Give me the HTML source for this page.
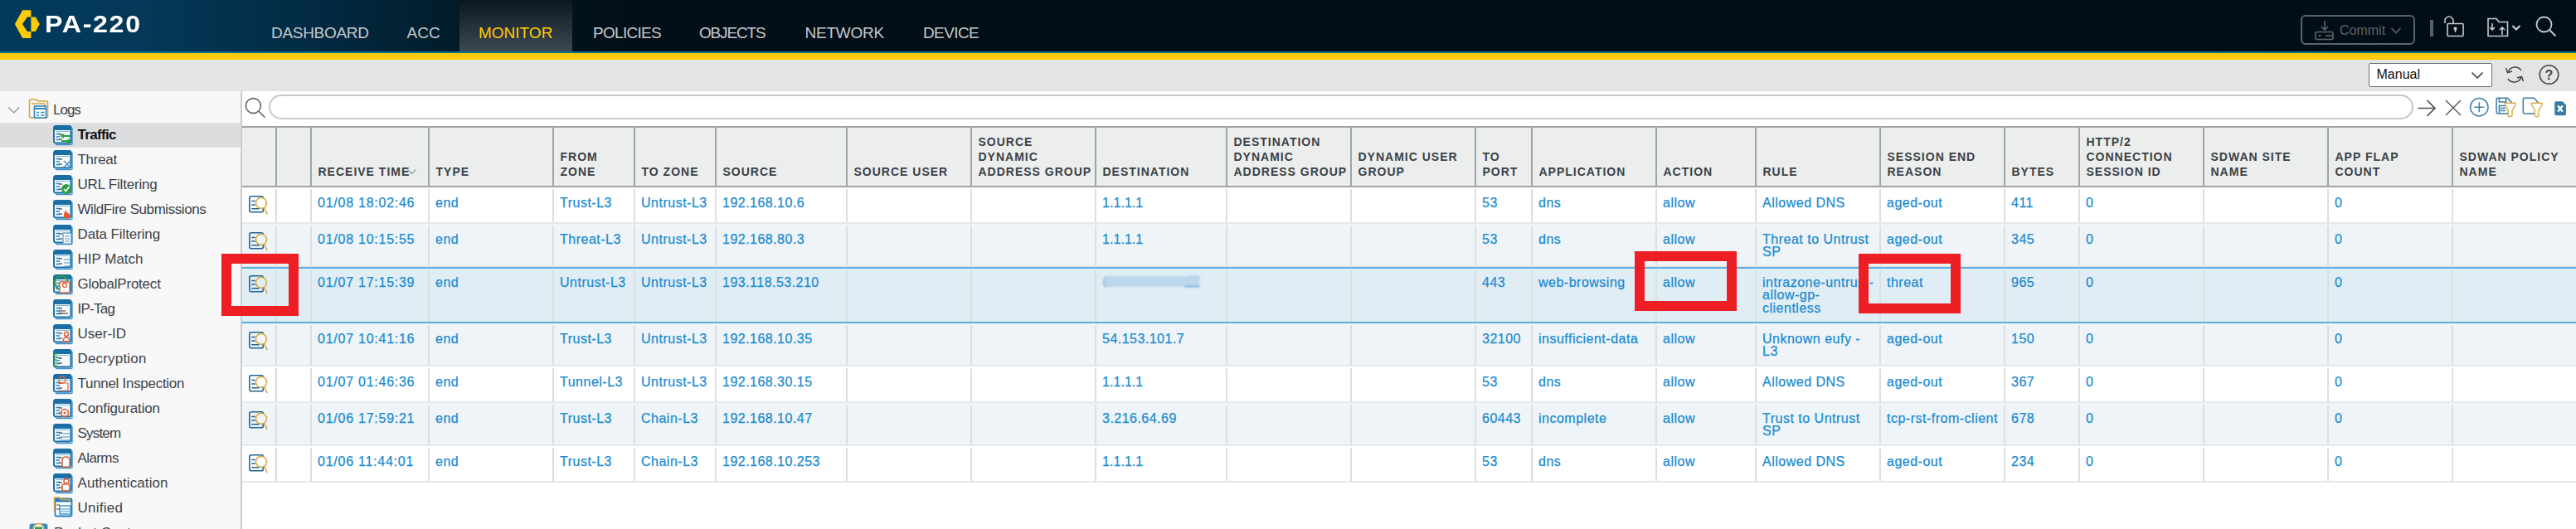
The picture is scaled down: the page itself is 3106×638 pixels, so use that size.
<!DOCTYPE html><html><head><meta charset="utf-8"><style>
html,body{margin:0;padding:0;}body{width:3106px;height:638px;overflow:hidden;position:relative;background:#fff;font-family:"Liberation Sans",sans-serif;}
.t{position:absolute;white-space:nowrap;}.b{-webkit-text-stroke:0.25px #1b8bd0;}.r{position:absolute;}svg{position:absolute;overflow:visible;}
</style></head><body>
<div class="r" style="left:0px;top:0px;width:3106px;height:62px;background:linear-gradient(90deg,#033a5c 0px,#033858 180px,#02273d 420px,#021722 600px,#020f18 760px,#020e17 3106px);"></div>
<div class="r" style="left:554px;top:0px;width:136px;height:62px;background:linear-gradient(180deg,#0b171f 0%,#24313a 50%,#3c4952 100%);"></div>
<div class="r" style="left:0px;top:62px;width:3106px;height:2px;background:#0a6e99;"></div>
<div class="r" style="left:0px;top:64px;width:3106px;height:8px;background:#ffcb05;"></div>
<div class="r" style="left:0px;top:72px;width:3106px;height:38px;background:#e3e4e6;"></div>
<svg style="left:0;top:0" width="60" height="62"><path fill="#ffcb05" d="M17.9,28.9 L27.2,12.2 L37.4,12.2 L37.4,20.4 L32.9,20.4 L27,28.9 L32.9,38 L37.4,38 L37.4,45.9 L27.2,45.9 Z M37.4,20.4 L42.9,20.4 L47.9,28.9 L42.9,38 L37.4,38 Z"/></svg>
<div class="t" style="left:54px;top:15.15px;font-size:29px;line-height:29px;color:#ffffff;font-weight:bold;letter-spacing:1.5px;transform:scaleX(1.11);transform-origin:0 0;">PA-220</div>
<div class="t" style="left:327px;top:29.92px;font-size:19px;line-height:19px;color:#c5c9cc;font-weight:normal;letter-spacing:-0.31px;">DASHBOARD</div>
<div class="t" style="left:490.5px;top:29.92px;font-size:19px;line-height:19px;color:#c5c9cc;font-weight:normal;letter-spacing:0px;">ACC</div>
<div class="t" style="left:577px;top:29.92px;font-size:19px;line-height:19px;color:#ffcb05;font-weight:normal;letter-spacing:0px;">MONITOR</div>
<div class="t" style="left:715px;top:29.92px;font-size:19px;line-height:19px;color:#c5c9cc;font-weight:normal;letter-spacing:-0.7px;">POLICIES</div>
<div class="t" style="left:843px;top:29.92px;font-size:19px;line-height:19px;color:#c5c9cc;font-weight:normal;letter-spacing:-1.17px;">OBJECTS</div>
<div class="t" style="left:970.5px;top:29.92px;font-size:19px;line-height:19px;color:#c5c9cc;font-weight:normal;letter-spacing:-0.25px;">NETWORK</div>
<div class="t" style="left:1113px;top:29.92px;font-size:19px;line-height:19px;color:#c5c9cc;font-weight:normal;letter-spacing:-0.6px;">DEVICE</div>
<div class="r" style="left:2774px;top:18px;width:134px;height:32px;border:2px solid #5d6469;border-radius:6px;"></div>
<svg style="left:2790px;top:23.5px" width="26" height="28"><g fill="none" stroke="#5d6469" stroke-width="1.6"><path d="M13,1 V12 M9,8 L13,12 L17,8"/><rect x="2" y="14.5" width="21" height="9" rx="2"/><path d="M14,19 H23"/></g><circle cx="7" cy="19" r="1.3" fill="#5d6469"/></svg>
<div class="t" style="left:2821px;top:28.66px;font-size:16px;line-height:16px;color:#5d6469;font-weight:normal;letter-spacing:0px;">Commit</div>
<svg style="left:2882px;top:32px" width="14" height="10"><path d="M1.5,2 L7,7.5 L12.5,2" fill="none" stroke="#5d6469" stroke-width="1.6"/></svg>
<div class="r" style="left:2930px;top:24px;width:4px;height:20px;background:#5a6166;"></div>
<svg style="left:2946px;top:19px" width="28" height="26"><g fill="none" stroke="#c8cbcd" stroke-width="1.6"><path d="M2,9 V6 A5,5 0 0 1 12,6 V9"/><rect x="5" y="9.5" width="19" height="15" rx="1"/></g><circle cx="14.5" cy="15.5" r="2" fill="#c8cbcd"/><rect x="13.7" y="16" width="1.6" height="4" fill="#c8cbcd"/></svg>
<svg style="left:2999px;top:21px" width="44" height="24"><g fill="none" stroke="#c8cbcd" stroke-width="1.6"><path d="M1,1.5 H11 L14,5.5 H24.5 V22.5 H1 Z"/><path d="M6,7 V15 M3,12 L6,15 L9,12 M18,21 V12 M15,15 L18,12 L21,15"/></g><path d="M30.5,10 L35,14.5 L39.5,10" fill="none" stroke="#c8cbcd" stroke-width="2.2"/></svg>
<svg style="left:3057px;top:19px" width="28" height="28"><g fill="none" stroke="#c8cbcd" stroke-width="1.8"><circle cx="10.5" cy="10.5" r="9"/><path d="M17,17 L24.5,24.5"/></g></svg>
<div class="r" style="left:2856px;top:76px;width:147px;height:27px;background:#fff;border:1px solid #6b6f72;border-radius:2px;"></div>
<div class="t" style="left:2865.5px;top:82.36px;font-size:16px;line-height:16px;color:#111;font-weight:normal;letter-spacing:0px;">Manual</div>
<svg style="left:2979px;top:86px" width="16" height="11"><path d="M1.5,1.5 L8,8 L14.5,1.5" fill="none" stroke="#333" stroke-width="1.5"/></svg>
<svg style="left:3020px;top:78px" width="24" height="24"><g fill="none" stroke="#444" stroke-width="1.5"><path d="M4,9 A9,9 0 0 1 20,7"/><path d="M20,15 A9,9 0 0 1 4,17"/><path d="M1.5,4 L3.5,9.5 L9,8"/><path d="M22.5,20 L20.5,14.5 L15,16"/></g></svg>
<svg style="left:3061px;top:78px" width="26" height="26"><circle cx="12.5" cy="12" r="11.3" fill="none" stroke="#444" stroke-width="1.5"/><text x="12.5" y="17.5" text-anchor="middle" font-family="Liberation Sans" font-weight="bold" font-size="16" fill="#444">?</text></svg>
<div class="r" style="left:0px;top:110px;width:290px;height:528px;background:#f8f8f8;"></div>
<div class="r" style="left:290px;top:110px;width:2px;height:528px;background:#c9ccce;"></div>
<div class="r" style="left:0px;top:148px;width:290px;height:30px;background:#dcdddf;"></div>
<svg style="left:9px;top:128px" width="16" height="10"><path d="M1.2,1.5 L7.7,8 L14.2,1.5" fill="none" stroke="#979ca0" stroke-width="1.5"/></svg>
<svg style="left:34px;top:119px" width="25" height="24"><g fill="none" stroke="#d6a53c" stroke-width="1.6"><path d="M1.5,3 Q1.5,1 3.5,1 H10 L12,3 H21.5 Q23.5,3 23.5,5 V21.5 Q23.5,23 21.5,23 H3.5 Q1.5,23 1.5,21 Z"/><path d="M4,6 H20 V13"/></g><rect x="7.5" y="9" width="14" height="14" fill="#fff" stroke="#2e86c1" stroke-width="1.6"/><rect x="8" y="11" width="13" height="2" fill="#2e86c1"/><path d="M10,16.5 H13 M15,16.5 H19.5 M10,20 H13 M15,20 H19.5" stroke="#2e86c1" stroke-width="1.4"/></svg>
<div class="t" style="left:64px;top:124.11px;font-size:17px;line-height:17px;color:#3c4349;font-weight:normal;letter-spacing:-1px;">Logs</div>
<svg style="left:64px;top:151px" width="25" height="26"><path d="M3.2,3 H22 Q23,3 23,4 V22.5 Q23,23.5 22,23.5 H3.2" fill="none" stroke="#3d93cc" stroke-width="1.4"/><rect x="1" y="1" width="20.5" height="20.5" rx="2" fill="#f4f9fc" stroke="#1a6fa6" stroke-width="1.9"/><rect x="1" y="1" width="20.5" height="5" rx="1" fill="#1a6fa6"/><path d="M3.5,7.5 H19.5" stroke="#7db3d8" stroke-width="1"/><path d="M3.5,10.5 H8 M3.5,14 H8 M3.5,17.5 H8" stroke="#2d7fb8" stroke-width="1.3"/><path d="M7,11 H11 M7,17 H11" stroke="#222" stroke-width="1"/><path d="M10,13 H21 M13,11 L10,13 L13,15 M10,19 H21 M18,17 L21,19 L18,21" stroke="#2ea043" stroke-width="2" fill="none"/></svg>
<div class="t" style="left:93.5px;top:154.11px;font-size:17px;line-height:17px;color:#111;font-weight:bold;letter-spacing:-0.67px;">Traffic</div>
<svg style="left:64px;top:181px" width="25" height="26"><path d="M3.2,3 H22 Q23,3 23,4 V22.5 Q23,23.5 22,23.5 H3.2" fill="none" stroke="#3d93cc" stroke-width="1.4"/><rect x="1" y="1" width="20.5" height="20.5" rx="2" fill="#f4f9fc" stroke="#1a6fa6" stroke-width="1.9"/><rect x="1" y="1" width="20.5" height="5" rx="1" fill="#1a6fa6"/><path d="M3.5,7.5 H19.5" stroke="#7db3d8" stroke-width="1"/><path d="M3.5,10.5 H8 M3.5,14 H8 M3.5,17.5 H8" stroke="#2d7fb8" stroke-width="1.3"/><path d="M7,11 H11 M7,17 H11" stroke="#222" stroke-width="1"/><path d="M13,13 L21,21 M21,13 L13,21" stroke="#4a8fc6" stroke-width="1.5"/></svg>
<div class="t" style="left:93.5px;top:184.11px;font-size:17px;line-height:17px;color:#3c4349;font-weight:normal;letter-spacing:-0.28px;">Threat</div>
<svg style="left:64px;top:211px" width="25" height="26"><path d="M3.2,3 H22 Q23,3 23,4 V22.5 Q23,23.5 22,23.5 H3.2" fill="none" stroke="#3d93cc" stroke-width="1.4"/><rect x="1" y="1" width="20.5" height="20.5" rx="2" fill="#f4f9fc" stroke="#1a6fa6" stroke-width="1.9"/><rect x="1" y="1" width="20.5" height="5" rx="1" fill="#1a6fa6"/><path d="M3.5,7.5 H19.5" stroke="#7db3d8" stroke-width="1"/><path d="M3.5,10.5 H8 M3.5,14 H8 M3.5,17.5 H8" stroke="#2d7fb8" stroke-width="1.3"/><path d="M7,11 H11 M7,17 H11" stroke="#222" stroke-width="1"/><circle cx="16" cy="17" r="6" fill="#2ea043"/><path d="M13,17 L15.5,19.5 L19.5,14" stroke="#fff" stroke-width="1.6" fill="none"/></svg>
<div class="t" style="left:93.5px;top:214.11px;font-size:17px;line-height:17px;color:#3c4349;font-weight:normal;letter-spacing:-0.2px;">URL Filtering</div>
<svg style="left:64px;top:241px" width="25" height="26"><path d="M3.2,3 H22 Q23,3 23,4 V22.5 Q23,23.5 22,23.5 H3.2" fill="none" stroke="#3d93cc" stroke-width="1.4"/><rect x="1" y="1" width="20.5" height="20.5" rx="2" fill="#f4f9fc" stroke="#1a6fa6" stroke-width="1.9"/><rect x="1" y="1" width="20.5" height="5" rx="1" fill="#1a6fa6"/><path d="M3.5,7.5 H19.5" stroke="#7db3d8" stroke-width="1"/><path d="M3.5,10.5 H8 M3.5,14 H8 M3.5,17.5 H8" stroke="#2d7fb8" stroke-width="1.3"/><path d="M7,11 H11 M7,17 H11" stroke="#222" stroke-width="1"/><path d="M17,23 Q12,22 13,17 Q14,14 16,12 Q16,16 18,16 Q22,18 20,22 Z" fill="#f05a28"/></svg>
<div class="t" style="left:93.5px;top:244.11px;font-size:17px;line-height:17px;color:#3c4349;font-weight:normal;letter-spacing:-0.43px;">WildFire Submissions</div>
<svg style="left:64px;top:271px" width="25" height="26"><path d="M3.2,3 H22 Q23,3 23,4 V22.5 Q23,23.5 22,23.5 H3.2" fill="none" stroke="#3d93cc" stroke-width="1.4"/><rect x="1" y="1" width="20.5" height="20.5" rx="2" fill="#f4f9fc" stroke="#1a6fa6" stroke-width="1.9"/><rect x="1" y="1" width="20.5" height="5" rx="1" fill="#1a6fa6"/><path d="M3.5,7.5 H19.5" stroke="#7db3d8" stroke-width="1"/><path d="M3.5,10.5 H8 M3.5,14 H8 M3.5,17.5 H8" stroke="#2d7fb8" stroke-width="1.3"/><path d="M7,11 H11 M7,17 H11" stroke="#222" stroke-width="1"/><rect x="12" y="10" width="10" height="13" fill="#fff" stroke="#4a8fc6" stroke-width="1.2"/><path d="M14,14 H20 M14,17 H20 M14,20 H20" stroke="#4a8fc6" stroke-width="1"/></svg>
<div class="t" style="left:93.5px;top:274.11px;font-size:17px;line-height:17px;color:#3c4349;font-weight:normal;letter-spacing:-0.11px;">Data Filtering</div>
<svg style="left:64px;top:301px" width="25" height="26"><path d="M3.2,3 H22 Q23,3 23,4 V22.5 Q23,23.5 22,23.5 H3.2" fill="none" stroke="#3d93cc" stroke-width="1.4"/><rect x="1" y="1" width="20.5" height="20.5" rx="2" fill="#f4f9fc" stroke="#1a6fa6" stroke-width="1.9"/><rect x="1" y="1" width="20.5" height="5" rx="1" fill="#1a6fa6"/><path d="M3.5,7.5 H19.5" stroke="#7db3d8" stroke-width="1"/><path d="M3.5,10.5 H8 M3.5,14 H8 M3.5,17.5 H8" stroke="#2d7fb8" stroke-width="1.3"/><path d="M7,11 H11 M7,17 H11" stroke="#222" stroke-width="1"/><path d="M13,12 H21 M13,16 H21 M13,20 H21" stroke="#4a8fc6" stroke-width="1.2"/></svg>
<div class="t" style="left:93.5px;top:304.11px;font-size:17px;line-height:17px;color:#3c4349;font-weight:normal;letter-spacing:0px;">HIP Match</div>
<svg style="left:64px;top:331px" width="25" height="26"><path d="M3.2,3 H22 Q23,3 23,4 V22.5 Q23,23.5 22,23.5 H3.2" fill="none" stroke="#3d93cc" stroke-width="1.4"/><rect x="1" y="1" width="20.5" height="20.5" rx="2" fill="#f4f9fc" stroke="#1a6fa6" stroke-width="1.9"/><rect x="1" y="1" width="20.5" height="5" rx="1" fill="#1a6fa6"/><path d="M3.5,7.5 H19.5" stroke="#7db3d8" stroke-width="1"/><path d="M3.5,10.5 H8 M3.5,14 H8 M3.5,17.5 H8" stroke="#2d7fb8" stroke-width="1.3"/><path d="M7,11 H11 M7,17 H11" stroke="#222" stroke-width="1"/><circle cx="10" cy="10" r="8" fill="none" stroke="#2ea043" stroke-width="2.2"/><rect x="8" y="9" width="12" height="13" rx="1" fill="#fff" stroke="#e0603a" stroke-width="1.5"/><circle cx="14" cy="13" r="2.5" fill="none" stroke="#e0603a" stroke-width="1.3"/></svg>
<div class="t" style="left:93.5px;top:334.11px;font-size:17px;line-height:17px;color:#3c4349;font-weight:normal;letter-spacing:-0.22px;">GlobalProtect</div>
<svg style="left:64px;top:361px" width="25" height="26"><path d="M3.2,3 H22 Q23,3 23,4 V22.5 Q23,23.5 22,23.5 H3.2" fill="none" stroke="#3d93cc" stroke-width="1.4"/><rect x="1" y="1" width="20.5" height="20.5" rx="2" fill="#f4f9fc" stroke="#1a6fa6" stroke-width="1.9"/><rect x="1" y="1" width="20.5" height="5" rx="1" fill="#1a6fa6"/><path d="M3.5,7.5 H19.5" stroke="#7db3d8" stroke-width="1"/><path d="M3.5,10.5 H8 M3.5,14 H8 M3.5,17.5 H8" stroke="#2d7fb8" stroke-width="1.3"/><path d="M7,11 H11 M7,17 H11" stroke="#222" stroke-width="1"/><path d="M7,14 H15 M7,17 H18" stroke="#333" stroke-width="1.2"/></svg>
<div class="t" style="left:93.5px;top:364.11px;font-size:17px;line-height:17px;color:#3c4349;font-weight:normal;letter-spacing:-0.76px;">IP-Tag</div>
<svg style="left:64px;top:391px" width="25" height="26"><path d="M3.2,3 H22 Q23,3 23,4 V22.5 Q23,23.5 22,23.5 H3.2" fill="none" stroke="#3d93cc" stroke-width="1.4"/><rect x="1" y="1" width="20.5" height="20.5" rx="2" fill="#f4f9fc" stroke="#1a6fa6" stroke-width="1.9"/><rect x="1" y="1" width="20.5" height="5" rx="1" fill="#1a6fa6"/><path d="M3.5,7.5 H19.5" stroke="#7db3d8" stroke-width="1"/><path d="M3.5,10.5 H8 M3.5,14 H8 M3.5,17.5 H8" stroke="#2d7fb8" stroke-width="1.3"/><path d="M7,11 H11 M7,17 H11" stroke="#222" stroke-width="1"/><circle cx="16" cy="12" r="2.5" fill="none" stroke="#e0603a" stroke-width="1.4"/><path d="M12,21 Q12,16 16,16 Q20,16 20,21 Z" fill="none" stroke="#e0603a" stroke-width="1.4"/></svg>
<div class="t" style="left:93.5px;top:394.11px;font-size:17px;line-height:17px;color:#3c4349;font-weight:normal;letter-spacing:0px;">User-ID</div>
<svg style="left:64px;top:421px" width="25" height="26"><path d="M3.2,3 H22 Q23,3 23,4 V22.5 Q23,23.5 22,23.5 H3.2" fill="none" stroke="#3d93cc" stroke-width="1.4"/><rect x="1" y="1" width="20.5" height="20.5" rx="2" fill="#f4f9fc" stroke="#1a6fa6" stroke-width="1.9"/><rect x="1" y="1" width="20.5" height="5" rx="1" fill="#1a6fa6"/><path d="M3.5,7.5 H19.5" stroke="#7db3d8" stroke-width="1"/><path d="M3.5,10.5 H8 M3.5,14 H8 M3.5,17.5 H8" stroke="#2d7fb8" stroke-width="1.3"/><path d="M7,11 H11 M7,17 H11" stroke="#222" stroke-width="1"/><path d="M3,5 V23" stroke="#58b947" stroke-width="3" stroke-dasharray="2,1.5"/></svg>
<div class="t" style="left:93.5px;top:424.11px;font-size:17px;line-height:17px;color:#3c4349;font-weight:normal;letter-spacing:0.18px;">Decryption</div>
<svg style="left:64px;top:451px" width="25" height="26"><path d="M3.2,3 H22 Q23,3 23,4 V22.5 Q23,23.5 22,23.5 H3.2" fill="none" stroke="#3d93cc" stroke-width="1.4"/><rect x="1" y="1" width="20.5" height="20.5" rx="2" fill="#f4f9fc" stroke="#1a6fa6" stroke-width="1.9"/><rect x="1" y="1" width="20.5" height="5" rx="1" fill="#1a6fa6"/><path d="M3.5,7.5 H19.5" stroke="#7db3d8" stroke-width="1"/><path d="M3.5,10.5 H8 M3.5,14 H8 M3.5,17.5 H8" stroke="#2d7fb8" stroke-width="1.3"/><path d="M7,11 H11 M7,17 H11" stroke="#222" stroke-width="1"/><circle cx="11" cy="7" r="4" fill="none" stroke="#e0603a" stroke-width="1.4"/><path d="M6,11 H18 V20 H6" fill="none" stroke="#e0603a" stroke-width="1.2"/></svg>
<div class="t" style="left:93.5px;top:454.11px;font-size:17px;line-height:17px;color:#3c4349;font-weight:normal;letter-spacing:-0.29px;">Tunnel Inspection</div>
<svg style="left:64px;top:481px" width="25" height="26"><path d="M3.2,3 H22 Q23,3 23,4 V22.5 Q23,23.5 22,23.5 H3.2" fill="none" stroke="#3d93cc" stroke-width="1.4"/><rect x="1" y="1" width="20.5" height="20.5" rx="2" fill="#f4f9fc" stroke="#1a6fa6" stroke-width="1.9"/><rect x="1" y="1" width="20.5" height="5" rx="1" fill="#1a6fa6"/><path d="M3.5,7.5 H19.5" stroke="#7db3d8" stroke-width="1"/><path d="M3.5,10.5 H8 M3.5,14 H8 M3.5,17.5 H8" stroke="#2d7fb8" stroke-width="1.3"/><path d="M7,11 H11 M7,17 H11" stroke="#222" stroke-width="1"/><circle cx="14" cy="17" r="4.5" fill="none" stroke="#e0603a" stroke-width="1.6"/><circle cx="14" cy="17" r="1.5" fill="#e0603a"/></svg>
<div class="t" style="left:93.5px;top:484.11px;font-size:17px;line-height:17px;color:#3c4349;font-weight:normal;letter-spacing:-0.13px;">Configuration</div>
<svg style="left:64px;top:511px" width="25" height="26"><path d="M3.2,3 H22 Q23,3 23,4 V22.5 Q23,23.5 22,23.5 H3.2" fill="none" stroke="#3d93cc" stroke-width="1.4"/><rect x="1" y="1" width="20.5" height="20.5" rx="2" fill="#f4f9fc" stroke="#1a6fa6" stroke-width="1.9"/><rect x="1" y="1" width="20.5" height="5" rx="1" fill="#1a6fa6"/><path d="M3.5,7.5 H19.5" stroke="#7db3d8" stroke-width="1"/><path d="M3.5,10.5 H8 M3.5,14 H8 M3.5,17.5 H8" stroke="#2d7fb8" stroke-width="1.3"/><path d="M7,11 H11 M7,17 H11" stroke="#222" stroke-width="1"/><path d="M9,12 H20 M9,16 H20 M9,20 H20" stroke="#4a8fc6" stroke-width="1.2"/></svg>
<div class="t" style="left:93.5px;top:514.11px;font-size:17px;line-height:17px;color:#3c4349;font-weight:normal;letter-spacing:-0.8px;">System</div>
<svg style="left:64px;top:541px" width="25" height="26"><path d="M3.2,3 H22 Q23,3 23,4 V22.5 Q23,23.5 22,23.5 H3.2" fill="none" stroke="#3d93cc" stroke-width="1.4"/><rect x="1" y="1" width="20.5" height="20.5" rx="2" fill="#f4f9fc" stroke="#1a6fa6" stroke-width="1.9"/><rect x="1" y="1" width="20.5" height="5" rx="1" fill="#1a6fa6"/><path d="M3.5,7.5 H19.5" stroke="#7db3d8" stroke-width="1"/><path d="M3.5,10.5 H8 M3.5,14 H8 M3.5,17.5 H8" stroke="#2d7fb8" stroke-width="1.3"/><path d="M7,11 H11 M7,17 H11" stroke="#222" stroke-width="1"/><path d="M11,22 V15 Q11,10 15.5,10 Q20,10 20,15 V22 Z" fill="#fff" stroke="#e0603a" stroke-width="1.5"/></svg>
<div class="t" style="left:93.5px;top:544.11px;font-size:17px;line-height:17px;color:#3c4349;font-weight:normal;letter-spacing:-0.6px;">Alarms</div>
<svg style="left:64px;top:571px" width="25" height="26"><path d="M3.2,3 H22 Q23,3 23,4 V22.5 Q23,23.5 22,23.5 H3.2" fill="none" stroke="#3d93cc" stroke-width="1.4"/><rect x="1" y="1" width="20.5" height="20.5" rx="2" fill="#f4f9fc" stroke="#1a6fa6" stroke-width="1.9"/><rect x="1" y="1" width="20.5" height="5" rx="1" fill="#1a6fa6"/><path d="M3.5,7.5 H19.5" stroke="#7db3d8" stroke-width="1"/><path d="M3.5,10.5 H8 M3.5,14 H8 M3.5,17.5 H8" stroke="#2d7fb8" stroke-width="1.3"/><path d="M7,11 H11 M7,17 H11" stroke="#222" stroke-width="1"/><circle cx="16" cy="9" r="3" fill="none" stroke="#e0603a" stroke-width="1.5"/><rect x="11" y="13" width="9" height="8" rx="2" fill="none" stroke="#e0603a" stroke-width="1.5"/></svg>
<div class="t" style="left:93.5px;top:574.11px;font-size:17px;line-height:17px;color:#3c4349;font-weight:normal;letter-spacing:0.1px;">Authentication</div>
<svg style="left:64px;top:599px" width="25" height="26"><rect x="2.5" y="2.5" width="20" height="21" rx="1.5" fill="#fff" stroke="#1f7fbf" stroke-width="1.8"/><rect x="2.5" y="2.5" width="20" height="4" fill="#1f7fbf"/><rect x="8" y="11" width="13" height="10" fill="#fff" stroke="#2e8fcf" stroke-width="1.4"/><path d="M9,15 H20 M9,18 H20" stroke="#2e8fcf" stroke-width="1.2"/><path d="M4.5,10 H8 M4.5,15 H8" stroke="#333" stroke-width="1"/><path d="M1.5,17 V1 H7.5 L9.5,3.5 H20 V7" fill="none" stroke="#d6a53c" stroke-width="1.5"/></svg>
<div class="t" style="left:93.5px;top:604.11px;font-size:17px;line-height:17px;color:#3c4349;font-weight:normal;letter-spacing:0.27px;">Unified</div>
<svg style="left:35px;top:629px" width="24" height="12"><rect x="0.5" y="2.5" width="22" height="14" rx="3" fill="#2e8fcf"/><circle cx="11.5" cy="9" r="6.5" fill="#fff" stroke="#d6a53c" stroke-width="1.6"/><rect x="7" y="6.5" width="9" height="6" fill="#2ea043"/></svg>
<div class="t" style="left:65px;top:633.61px;font-size:17px;line-height:17px;color:#3c4349;font-weight:normal;letter-spacing:0px;">Packet Capture</div>
<svg style="left:294px;top:116px" width="30" height="30"><g fill="none" stroke="#5c6369" stroke-width="1.6"><circle cx="11.4" cy="11.6" r="9"/><path d="M18,18.2 L25.6,25.7"/></g></svg>
<div class="r" style="left:324px;top:114px;width:2582px;height:26px;border:2px solid #c5c8ca;border-radius:15px;background:#fff"></div>
<svg style="left:2914px;top:119px" width="26" height="24"><g fill="none" stroke="#4d4d4d" stroke-width="1.7"><path d="M1.5,11.5 H22 M12.5,2 L22,11.5 L12.5,21"/></g></svg>
<svg style="left:2947px;top:119px" width="22" height="22"><g fill="none" stroke="#555" stroke-width="1.4"><path d="M2,2 L20,20 M20,2 L2,20"/></g></svg>
<svg style="left:2977px;top:117px" width="26" height="26"><circle cx="12.3" cy="12.2" r="10.7" fill="none" stroke="#4584ad" stroke-width="1.5"/><path d="M12.3,6.3 V18.3 M6.3,12.2 H18.3" stroke="#4584ad" stroke-width="1.6"/></svg>
<svg style="left:3009px;top:117px" width="28" height="26"><g fill="none" stroke="#3a7ca5" stroke-width="1.5"><path d="M2.8,1.2 H14.5 L19.2,6.5 V18.2 Q19.2,19.9 17.5,19.9 H2.8 Q1.1,19.9 1.1,18.2 V2.9 Q1.1,1.2 2.8,1.2 Z"/><path d="M4.4,1.5 V6 H12.7 V1.5"/><path d="M4.4,20 V10.4 H13"/><path d="M5.5,13.6 H12 M5.5,16.5 H12"/></g><path d="M11.2,8.8 Q10.6,7.2 12.3,7.2 H23.3 Q25,7.2 24.3,8.8 L20,16.2 V22.8 Q17.5,24.6 15.3,22.8 V16.2 Z" fill="#fff" stroke="#d9a93f" stroke-width="1.4"/></svg>
<svg style="left:3041px;top:117px" width="28" height="26"><g fill="none" stroke="#3a7ca5" stroke-width="1.5"><path d="M3,1.2 H14.5 L19.2,6.5 V18.2 Q19.2,19.9 17.5,19.9 H3 Q1.3,19.9 1.3,18.2 V2.9 Q1.3,1.2 3,1.2 Z"/></g><path d="M11.2,8.8 Q10.6,7.2 12.3,7.2 H23.3 Q25,7.2 24.3,8.8 L20,16.2 V22.8 Q17.5,24.6 15.3,22.8 V16.2 Z" fill="#fff" stroke="#d9a93f" stroke-width="1.4"/></svg>
<svg style="left:3079px;top:121px" width="17" height="20"><path d="M3.2,1.3 H10.5 L15,5.6 V16.2 Q15,18.3 12.9,18.3 H3.2 Q1.2,18.3 1.2,16.2 V3.4 Q1.2,1.3 3.2,1.3 Z" fill="#3a7ca5"/><path d="M5.2,6.5 L10.8,13.6 M10.8,6.5 L5.2,13.6" stroke="#fff" stroke-width="2.2"/></svg>
<div class="r" style="left:292px;top:152px;width:2814px;height:2px;background:#9ea3a6;"></div>
<div class="r" style="left:292px;top:154px;width:2814px;height:70px;background:#eceeed;"></div>
<div class="r" style="left:292px;top:224px;width:2814px;height:2px;background:#9ea3a6;"></div>
<div class="r" style="left:332px;top:154px;width:2px;height:70px;background:#9ea3a6;"></div>
<div class="r" style="left:374px;top:154px;width:2px;height:70px;background:#9ea3a6;"></div>
<div class="r" style="left:516px;top:154px;width:2px;height:70px;background:#9ea3a6;"></div>
<div class="r" style="left:666px;top:154px;width:2px;height:70px;background:#9ea3a6;"></div>
<div class="r" style="left:764px;top:154px;width:2px;height:70px;background:#9ea3a6;"></div>
<div class="r" style="left:862px;top:154px;width:2px;height:70px;background:#9ea3a6;"></div>
<div class="r" style="left:1020px;top:154px;width:2px;height:70px;background:#9ea3a6;"></div>
<div class="r" style="left:1170px;top:154px;width:2px;height:70px;background:#9ea3a6;"></div>
<div class="r" style="left:1320px;top:154px;width:2px;height:70px;background:#9ea3a6;"></div>
<div class="r" style="left:1478px;top:154px;width:2px;height:70px;background:#9ea3a6;"></div>
<div class="r" style="left:1628px;top:154px;width:2px;height:70px;background:#9ea3a6;"></div>
<div class="r" style="left:1778px;top:154px;width:2px;height:70px;background:#9ea3a6;"></div>
<div class="r" style="left:1846px;top:154px;width:2px;height:70px;background:#9ea3a6;"></div>
<div class="r" style="left:1996px;top:154px;width:2px;height:70px;background:#9ea3a6;"></div>
<div class="r" style="left:2116px;top:154px;width:2px;height:70px;background:#9ea3a6;"></div>
<div class="r" style="left:2266px;top:154px;width:2px;height:70px;background:#9ea3a6;"></div>
<div class="r" style="left:2416px;top:154px;width:2px;height:70px;background:#9ea3a6;"></div>
<div class="r" style="left:2506px;top:154px;width:2px;height:70px;background:#9ea3a6;"></div>
<div class="r" style="left:2656px;top:154px;width:2px;height:70px;background:#9ea3a6;"></div>
<div class="r" style="left:2806px;top:154px;width:2px;height:70px;background:#9ea3a6;"></div>
<div class="r" style="left:2956px;top:154px;width:2px;height:70px;background:#9ea3a6;"></div>
<div class="t" style="left:383.5px;top:198.15px;font-size:14px;line-height:18px;color:#3a4147;font-weight:bold;letter-spacing:1.0px;">RECEIVE TIME</div>
<div class="t" style="left:525.5px;top:198.15px;font-size:14px;line-height:18px;color:#3a4147;font-weight:bold;letter-spacing:1.0px;">TYPE</div>
<div class="t" style="left:675.5px;top:180.15px;font-size:14px;line-height:18px;color:#3a4147;font-weight:bold;letter-spacing:1.0px;">FROM<br>ZONE</div>
<div class="t" style="left:773.5px;top:198.15px;font-size:14px;line-height:18px;color:#3a4147;font-weight:bold;letter-spacing:1.0px;">TO ZONE</div>
<div class="t" style="left:871.5px;top:198.15px;font-size:14px;line-height:18px;color:#3a4147;font-weight:bold;letter-spacing:1.0px;">SOURCE</div>
<div class="t" style="left:1029.5px;top:198.15px;font-size:14px;line-height:18px;color:#3a4147;font-weight:bold;letter-spacing:1.0px;">SOURCE USER</div>
<div class="t" style="left:1179.5px;top:162.15px;font-size:14px;line-height:18px;color:#3a4147;font-weight:bold;letter-spacing:1.0px;">SOURCE<br>DYNAMIC<br>ADDRESS GROUP</div>
<div class="t" style="left:1329.5px;top:198.15px;font-size:14px;line-height:18px;color:#3a4147;font-weight:bold;letter-spacing:1.0px;">DESTINATION</div>
<div class="t" style="left:1487.5px;top:162.15px;font-size:14px;line-height:18px;color:#3a4147;font-weight:bold;letter-spacing:1.0px;">DESTINATION<br>DYNAMIC<br>ADDRESS GROUP</div>
<div class="t" style="left:1637.5px;top:180.15px;font-size:14px;line-height:18px;color:#3a4147;font-weight:bold;letter-spacing:1.0px;">DYNAMIC USER<br>GROUP</div>
<div class="t" style="left:1787.5px;top:180.15px;font-size:14px;line-height:18px;color:#3a4147;font-weight:bold;letter-spacing:1.0px;">TO<br>PORT</div>
<div class="t" style="left:1855.5px;top:198.15px;font-size:14px;line-height:18px;color:#3a4147;font-weight:bold;letter-spacing:1.0px;">APPLICATION</div>
<div class="t" style="left:2005.5px;top:198.15px;font-size:14px;line-height:18px;color:#3a4147;font-weight:bold;letter-spacing:1.0px;">ACTION</div>
<div class="t" style="left:2125.5px;top:198.15px;font-size:14px;line-height:18px;color:#3a4147;font-weight:bold;letter-spacing:1.0px;">RULE</div>
<div class="t" style="left:2275.5px;top:180.15px;font-size:14px;line-height:18px;color:#3a4147;font-weight:bold;letter-spacing:1.0px;">SESSION END<br>REASON</div>
<div class="t" style="left:2425.5px;top:198.15px;font-size:14px;line-height:18px;color:#3a4147;font-weight:bold;letter-spacing:1.0px;">BYTES</div>
<div class="t" style="left:2515.5px;top:162.15px;font-size:14px;line-height:18px;color:#3a4147;font-weight:bold;letter-spacing:1.0px;">HTTP/2<br>CONNECTION<br>SESSION ID</div>
<div class="t" style="left:2665.5px;top:180.15px;font-size:14px;line-height:18px;color:#3a4147;font-weight:bold;letter-spacing:1.0px;">SDWAN SITE<br>NAME</div>
<div class="t" style="left:2815.5px;top:180.15px;font-size:14px;line-height:18px;color:#3a4147;font-weight:bold;letter-spacing:1.0px;">APP FLAP<br>COUNT</div>
<div class="t" style="left:2965.5px;top:180.15px;font-size:14px;line-height:18px;color:#3a4147;font-weight:bold;letter-spacing:1.0px;">SDWAN POLICY<br>NAME</div>
<svg style="left:490px;top:203px" width="14" height="10"><path d="M1.5,1.5 L6.5,6.5 L11.5,1.5" fill="none" stroke="#9aa0a4" stroke-width="1.3"/></svg>
<div class="r" style="left:292px;top:226px;width:2814px;height:42px;background:#ffffff;"></div>
<div class="r" style="left:292px;top:268px;width:2814px;height:2px;background:#e6e8e9;"></div>
<div class="r" style="left:332px;top:228px;width:2px;height:40px;background:#dcdee0;"></div>
<div class="r" style="left:374px;top:228px;width:2px;height:40px;background:#dcdee0;"></div>
<div class="r" style="left:516px;top:228px;width:2px;height:40px;background:#dcdee0;"></div>
<div class="r" style="left:666px;top:228px;width:2px;height:40px;background:#dcdee0;"></div>
<div class="r" style="left:764px;top:228px;width:2px;height:40px;background:#dcdee0;"></div>
<div class="r" style="left:862px;top:228px;width:2px;height:40px;background:#dcdee0;"></div>
<div class="r" style="left:1020px;top:228px;width:2px;height:40px;background:#dcdee0;"></div>
<div class="r" style="left:1170px;top:228px;width:2px;height:40px;background:#dcdee0;"></div>
<div class="r" style="left:1320px;top:228px;width:2px;height:40px;background:#dcdee0;"></div>
<div class="r" style="left:1478px;top:228px;width:2px;height:40px;background:#dcdee0;"></div>
<div class="r" style="left:1628px;top:228px;width:2px;height:40px;background:#dcdee0;"></div>
<div class="r" style="left:1778px;top:228px;width:2px;height:40px;background:#dcdee0;"></div>
<div class="r" style="left:1846px;top:228px;width:2px;height:40px;background:#dcdee0;"></div>
<div class="r" style="left:1996px;top:228px;width:2px;height:40px;background:#dcdee0;"></div>
<div class="r" style="left:2116px;top:228px;width:2px;height:40px;background:#dcdee0;"></div>
<div class="r" style="left:2266px;top:228px;width:2px;height:40px;background:#dcdee0;"></div>
<div class="r" style="left:2416px;top:228px;width:2px;height:40px;background:#dcdee0;"></div>
<div class="r" style="left:2506px;top:228px;width:2px;height:40px;background:#dcdee0;"></div>
<div class="r" style="left:2656px;top:228px;width:2px;height:40px;background:#dcdee0;"></div>
<div class="r" style="left:2806px;top:228px;width:2px;height:40px;background:#dcdee0;"></div>
<div class="r" style="left:2956px;top:228px;width:2px;height:40px;background:#dcdee0;"></div>
<div class="t b" style="left:383px;top:236.61px;font-size:16px;line-height:15.7px;color:#1b8bd0;font-weight:normal;letter-spacing:0.75px;">01/08 18:02:46</div>
<div class="t b" style="left:525px;top:236.61px;font-size:16px;line-height:15.7px;color:#1b8bd0;font-weight:normal;letter-spacing:0.5px;">end</div>
<div class="t b" style="left:675px;top:236.61px;font-size:16px;line-height:15.7px;color:#1b8bd0;font-weight:normal;letter-spacing:0.5px;">Trust-L3</div>
<div class="t b" style="left:773px;top:236.61px;font-size:16px;line-height:15.7px;color:#1b8bd0;font-weight:normal;letter-spacing:0.5px;">Untrust-L3</div>
<div class="t b" style="left:871px;top:236.61px;font-size:16px;line-height:15.7px;color:#1b8bd0;font-weight:normal;letter-spacing:0.48px;">192.168.10.6</div>
<div class="t b" style="left:1329px;top:236.61px;font-size:16px;line-height:15.7px;color:#1b8bd0;font-weight:normal;letter-spacing:0.05px;">1.1.1.1</div>
<div class="t b" style="left:1787px;top:236.61px;font-size:16px;line-height:15.7px;color:#1b8bd0;font-weight:normal;letter-spacing:0.5px;">53</div>
<div class="t b" style="left:1855px;top:236.61px;font-size:16px;line-height:15.7px;color:#1b8bd0;font-weight:normal;letter-spacing:0.5px;">dns</div>
<div class="t b" style="left:2005px;top:236.61px;font-size:16px;line-height:15.7px;color:#1b8bd0;font-weight:normal;letter-spacing:0.5px;">allow</div>
<div class="t b" style="left:2125px;top:236.61px;font-size:16px;line-height:15.7px;color:#1b8bd0;font-weight:normal;letter-spacing:0.5px;">Allowed DNS</div>
<div class="t b" style="left:2275px;top:236.61px;font-size:16px;line-height:15.7px;color:#1b8bd0;font-weight:normal;letter-spacing:0.5px;">aged-out</div>
<div class="t b" style="left:2425px;top:236.61px;font-size:16px;line-height:15.7px;color:#1b8bd0;font-weight:normal;letter-spacing:0.5px;">411</div>
<div class="t b" style="left:2515px;top:236.61px;font-size:16px;line-height:15.7px;color:#1b8bd0;font-weight:normal;letter-spacing:0.5px;">0</div>
<div class="t b" style="left:2815px;top:236.61px;font-size:16px;line-height:15.7px;color:#1b8bd0;font-weight:normal;letter-spacing:0.5px;">0</div>
<svg style="left:299px;top:235px" width="26" height="26"><rect x="1.9" y="1.7" width="16.4" height="19" rx="2" fill="none" stroke="#1f6391" stroke-width="1.6"/><path d="M4.3,7.5 H8.8 M4.3,12 H8.8 M4.3,16.7 H13.6" stroke="#1f6391" stroke-width="1.5"/><circle cx="16" cy="9.8" r="6.5" fill="#ffffff" stroke="#d4a53a" stroke-width="1.4"/><path d="M19.7,15.8 L23.3,23.3" stroke="#d4a53a" stroke-width="1.5"/></svg>
<div class="r" style="left:292px;top:270px;width:2814px;height:50px;background:#eef4f7;"></div>
<div class="r" style="left:292px;top:320px;width:2814px;height:2px;background:#e6e8e9;"></div>
<div class="r" style="left:332px;top:272px;width:2px;height:48px;background:#dcdee0;"></div>
<div class="r" style="left:374px;top:272px;width:2px;height:48px;background:#dcdee0;"></div>
<div class="r" style="left:516px;top:272px;width:2px;height:48px;background:#dcdee0;"></div>
<div class="r" style="left:666px;top:272px;width:2px;height:48px;background:#dcdee0;"></div>
<div class="r" style="left:764px;top:272px;width:2px;height:48px;background:#dcdee0;"></div>
<div class="r" style="left:862px;top:272px;width:2px;height:48px;background:#dcdee0;"></div>
<div class="r" style="left:1020px;top:272px;width:2px;height:48px;background:#dcdee0;"></div>
<div class="r" style="left:1170px;top:272px;width:2px;height:48px;background:#dcdee0;"></div>
<div class="r" style="left:1320px;top:272px;width:2px;height:48px;background:#dcdee0;"></div>
<div class="r" style="left:1478px;top:272px;width:2px;height:48px;background:#dcdee0;"></div>
<div class="r" style="left:1628px;top:272px;width:2px;height:48px;background:#dcdee0;"></div>
<div class="r" style="left:1778px;top:272px;width:2px;height:48px;background:#dcdee0;"></div>
<div class="r" style="left:1846px;top:272px;width:2px;height:48px;background:#dcdee0;"></div>
<div class="r" style="left:1996px;top:272px;width:2px;height:48px;background:#dcdee0;"></div>
<div class="r" style="left:2116px;top:272px;width:2px;height:48px;background:#dcdee0;"></div>
<div class="r" style="left:2266px;top:272px;width:2px;height:48px;background:#dcdee0;"></div>
<div class="r" style="left:2416px;top:272px;width:2px;height:48px;background:#dcdee0;"></div>
<div class="r" style="left:2506px;top:272px;width:2px;height:48px;background:#dcdee0;"></div>
<div class="r" style="left:2656px;top:272px;width:2px;height:48px;background:#dcdee0;"></div>
<div class="r" style="left:2806px;top:272px;width:2px;height:48px;background:#dcdee0;"></div>
<div class="r" style="left:2956px;top:272px;width:2px;height:48px;background:#dcdee0;"></div>
<div class="t b" style="left:383px;top:280.61px;font-size:16px;line-height:15.7px;color:#1b8bd0;font-weight:normal;letter-spacing:0.75px;">01/08 10:15:55</div>
<div class="t b" style="left:525px;top:280.61px;font-size:16px;line-height:15.7px;color:#1b8bd0;font-weight:normal;letter-spacing:0.5px;">end</div>
<div class="t b" style="left:675px;top:280.61px;font-size:16px;line-height:15.7px;color:#1b8bd0;font-weight:normal;letter-spacing:0.5px;">Threat-L3</div>
<div class="t b" style="left:773px;top:280.61px;font-size:16px;line-height:15.7px;color:#1b8bd0;font-weight:normal;letter-spacing:0.5px;">Untrust-L3</div>
<div class="t b" style="left:871px;top:280.61px;font-size:16px;line-height:15.7px;color:#1b8bd0;font-weight:normal;letter-spacing:0.48px;">192.168.80.3</div>
<div class="t b" style="left:1329px;top:280.61px;font-size:16px;line-height:15.7px;color:#1b8bd0;font-weight:normal;letter-spacing:0.05px;">1.1.1.1</div>
<div class="t b" style="left:1787px;top:280.61px;font-size:16px;line-height:15.7px;color:#1b8bd0;font-weight:normal;letter-spacing:0.5px;">53</div>
<div class="t b" style="left:1855px;top:280.61px;font-size:16px;line-height:15.7px;color:#1b8bd0;font-weight:normal;letter-spacing:0.5px;">dns</div>
<div class="t b" style="left:2005px;top:280.61px;font-size:16px;line-height:15.7px;color:#1b8bd0;font-weight:normal;letter-spacing:0.5px;">allow</div>
<div class="t b" style="left:2125px;top:280.61px;font-size:16px;line-height:15.7px;color:#1b8bd0;font-weight:normal;letter-spacing:0.5px;">Threat to Untrust<br>SP</div>
<div class="t b" style="left:2275px;top:280.61px;font-size:16px;line-height:15.7px;color:#1b8bd0;font-weight:normal;letter-spacing:0.5px;">aged-out</div>
<div class="t b" style="left:2425px;top:280.61px;font-size:16px;line-height:15.7px;color:#1b8bd0;font-weight:normal;letter-spacing:0.5px;">345</div>
<div class="t b" style="left:2515px;top:280.61px;font-size:16px;line-height:15.7px;color:#1b8bd0;font-weight:normal;letter-spacing:0.5px;">0</div>
<div class="t b" style="left:2815px;top:280.61px;font-size:16px;line-height:15.7px;color:#1b8bd0;font-weight:normal;letter-spacing:0.5px;">0</div>
<svg style="left:299px;top:279px" width="26" height="26"><rect x="1.9" y="1.7" width="16.4" height="19" rx="2" fill="none" stroke="#1f6391" stroke-width="1.6"/><path d="M4.3,7.5 H8.8 M4.3,12 H8.8 M4.3,16.7 H13.6" stroke="#1f6391" stroke-width="1.5"/><circle cx="16" cy="9.8" r="6.5" fill="#eef4f7" stroke="#d4a53a" stroke-width="1.4"/><path d="M19.7,15.8 L23.3,23.3" stroke="#d4a53a" stroke-width="1.5"/></svg>
<div class="r" style="left:292px;top:324px;width:2814px;height:64px;background:#e1edf5;"></div>
<div class="r" style="left:292px;top:322px;width:2814px;height:2px;background:#5aaedb;"></div>
<div class="r" style="left:292px;top:388px;width:2814px;height:2px;background:#5aaedb;"></div>
<div class="r" style="left:332px;top:326px;width:2px;height:62px;background:#dcdee0;"></div>
<div class="r" style="left:374px;top:326px;width:2px;height:62px;background:#dcdee0;"></div>
<div class="r" style="left:516px;top:326px;width:2px;height:62px;background:#dcdee0;"></div>
<div class="r" style="left:666px;top:326px;width:2px;height:62px;background:#dcdee0;"></div>
<div class="r" style="left:764px;top:326px;width:2px;height:62px;background:#dcdee0;"></div>
<div class="r" style="left:862px;top:326px;width:2px;height:62px;background:#dcdee0;"></div>
<div class="r" style="left:1020px;top:326px;width:2px;height:62px;background:#dcdee0;"></div>
<div class="r" style="left:1170px;top:326px;width:2px;height:62px;background:#dcdee0;"></div>
<div class="r" style="left:1320px;top:326px;width:2px;height:62px;background:#dcdee0;"></div>
<div class="r" style="left:1478px;top:326px;width:2px;height:62px;background:#dcdee0;"></div>
<div class="r" style="left:1628px;top:326px;width:2px;height:62px;background:#dcdee0;"></div>
<div class="r" style="left:1778px;top:326px;width:2px;height:62px;background:#dcdee0;"></div>
<div class="r" style="left:1846px;top:326px;width:2px;height:62px;background:#dcdee0;"></div>
<div class="r" style="left:1996px;top:326px;width:2px;height:62px;background:#dcdee0;"></div>
<div class="r" style="left:2116px;top:326px;width:2px;height:62px;background:#dcdee0;"></div>
<div class="r" style="left:2266px;top:326px;width:2px;height:62px;background:#dcdee0;"></div>
<div class="r" style="left:2416px;top:326px;width:2px;height:62px;background:#dcdee0;"></div>
<div class="r" style="left:2506px;top:326px;width:2px;height:62px;background:#dcdee0;"></div>
<div class="r" style="left:2656px;top:326px;width:2px;height:62px;background:#dcdee0;"></div>
<div class="r" style="left:2806px;top:326px;width:2px;height:62px;background:#dcdee0;"></div>
<div class="r" style="left:2956px;top:326px;width:2px;height:62px;background:#dcdee0;"></div>
<div class="t b" style="left:383px;top:332.61px;font-size:16px;line-height:15.7px;color:#1b8bd0;font-weight:normal;letter-spacing:0.75px;">01/07 17:15:39</div>
<div class="t b" style="left:525px;top:332.61px;font-size:16px;line-height:15.7px;color:#1b8bd0;font-weight:normal;letter-spacing:0.5px;">end</div>
<div class="t b" style="left:675px;top:332.61px;font-size:16px;line-height:15.7px;color:#1b8bd0;font-weight:normal;letter-spacing:0.5px;">Untrust-L3</div>
<div class="t b" style="left:773px;top:332.61px;font-size:16px;line-height:15.7px;color:#1b8bd0;font-weight:normal;letter-spacing:0.5px;">Untrust-L3</div>
<div class="t b" style="left:871px;top:332.61px;font-size:16px;line-height:15.7px;color:#1b8bd0;font-weight:normal;letter-spacing:0.48px;">193.118.53.210</div>
<div class="t b" style="left:1787px;top:332.61px;font-size:16px;line-height:15.7px;color:#1b8bd0;font-weight:normal;letter-spacing:0.5px;">443</div>
<div class="t b" style="left:1855px;top:332.61px;font-size:16px;line-height:15.7px;color:#1b8bd0;font-weight:normal;letter-spacing:0.5px;">web-browsing</div>
<div class="t b" style="left:2005px;top:332.61px;font-size:16px;line-height:15.7px;color:#1b8bd0;font-weight:normal;letter-spacing:0.5px;">allow</div>
<div class="t b" style="left:2125px;top:332.61px;font-size:16px;line-height:15.7px;color:#1b8bd0;font-weight:normal;letter-spacing:0.5px;">intrazone-untrust-<br>allow-gp-<br>clientless</div>
<div class="t b" style="left:2275px;top:332.61px;font-size:16px;line-height:15.7px;color:#1b8bd0;font-weight:normal;letter-spacing:0.5px;">threat</div>
<div class="t b" style="left:2425px;top:332.61px;font-size:16px;line-height:15.7px;color:#1b8bd0;font-weight:normal;letter-spacing:0.5px;">965</div>
<div class="t b" style="left:2515px;top:332.61px;font-size:16px;line-height:15.7px;color:#1b8bd0;font-weight:normal;letter-spacing:0.5px;">0</div>
<div class="t b" style="left:2815px;top:332.61px;font-size:16px;line-height:15.7px;color:#1b8bd0;font-weight:normal;letter-spacing:0.5px;">0</div>
<svg style="left:299px;top:331px" width="26" height="26"><rect x="1.9" y="1.7" width="16.4" height="19" rx="2" fill="none" stroke="#1f6391" stroke-width="1.6"/><path d="M4.3,7.5 H8.8 M4.3,12 H8.8 M4.3,16.7 H13.6" stroke="#1f6391" stroke-width="1.5"/><circle cx="16" cy="9.8" r="6.5" fill="#e1edf5" stroke="#d4a53a" stroke-width="1.4"/><path d="M19.7,15.8 L23.3,23.3" stroke="#d4a53a" stroke-width="1.5"/></svg>
<div class="r" style="left:292px;top:390px;width:2814px;height:50px;background:#eef4f7;"></div>
<div class="r" style="left:292px;top:440px;width:2814px;height:2px;background:#e6e8e9;"></div>
<div class="r" style="left:332px;top:392px;width:2px;height:48px;background:#dcdee0;"></div>
<div class="r" style="left:374px;top:392px;width:2px;height:48px;background:#dcdee0;"></div>
<div class="r" style="left:516px;top:392px;width:2px;height:48px;background:#dcdee0;"></div>
<div class="r" style="left:666px;top:392px;width:2px;height:48px;background:#dcdee0;"></div>
<div class="r" style="left:764px;top:392px;width:2px;height:48px;background:#dcdee0;"></div>
<div class="r" style="left:862px;top:392px;width:2px;height:48px;background:#dcdee0;"></div>
<div class="r" style="left:1020px;top:392px;width:2px;height:48px;background:#dcdee0;"></div>
<div class="r" style="left:1170px;top:392px;width:2px;height:48px;background:#dcdee0;"></div>
<div class="r" style="left:1320px;top:392px;width:2px;height:48px;background:#dcdee0;"></div>
<div class="r" style="left:1478px;top:392px;width:2px;height:48px;background:#dcdee0;"></div>
<div class="r" style="left:1628px;top:392px;width:2px;height:48px;background:#dcdee0;"></div>
<div class="r" style="left:1778px;top:392px;width:2px;height:48px;background:#dcdee0;"></div>
<div class="r" style="left:1846px;top:392px;width:2px;height:48px;background:#dcdee0;"></div>
<div class="r" style="left:1996px;top:392px;width:2px;height:48px;background:#dcdee0;"></div>
<div class="r" style="left:2116px;top:392px;width:2px;height:48px;background:#dcdee0;"></div>
<div class="r" style="left:2266px;top:392px;width:2px;height:48px;background:#dcdee0;"></div>
<div class="r" style="left:2416px;top:392px;width:2px;height:48px;background:#dcdee0;"></div>
<div class="r" style="left:2506px;top:392px;width:2px;height:48px;background:#dcdee0;"></div>
<div class="r" style="left:2656px;top:392px;width:2px;height:48px;background:#dcdee0;"></div>
<div class="r" style="left:2806px;top:392px;width:2px;height:48px;background:#dcdee0;"></div>
<div class="r" style="left:2956px;top:392px;width:2px;height:48px;background:#dcdee0;"></div>
<div class="t b" style="left:383px;top:400.61px;font-size:16px;line-height:15.7px;color:#1b8bd0;font-weight:normal;letter-spacing:0.75px;">01/07 10:41:16</div>
<div class="t b" style="left:525px;top:400.61px;font-size:16px;line-height:15.7px;color:#1b8bd0;font-weight:normal;letter-spacing:0.5px;">end</div>
<div class="t b" style="left:675px;top:400.61px;font-size:16px;line-height:15.7px;color:#1b8bd0;font-weight:normal;letter-spacing:0.5px;">Trust-L3</div>
<div class="t b" style="left:773px;top:400.61px;font-size:16px;line-height:15.7px;color:#1b8bd0;font-weight:normal;letter-spacing:0.5px;">Untrust-L3</div>
<div class="t b" style="left:871px;top:400.61px;font-size:16px;line-height:15.7px;color:#1b8bd0;font-weight:normal;letter-spacing:0.48px;">192.168.10.35</div>
<div class="t b" style="left:1329px;top:400.61px;font-size:16px;line-height:15.7px;color:#1b8bd0;font-weight:normal;letter-spacing:0.48px;">54.153.101.7</div>
<div class="t b" style="left:1787px;top:400.61px;font-size:16px;line-height:15.7px;color:#1b8bd0;font-weight:normal;letter-spacing:0.5px;">32100</div>
<div class="t b" style="left:1855px;top:400.61px;font-size:16px;line-height:15.7px;color:#1b8bd0;font-weight:normal;letter-spacing:0.5px;">insufficient-data</div>
<div class="t b" style="left:2005px;top:400.61px;font-size:16px;line-height:15.7px;color:#1b8bd0;font-weight:normal;letter-spacing:0.5px;">allow</div>
<div class="t b" style="left:2125px;top:400.61px;font-size:16px;line-height:15.7px;color:#1b8bd0;font-weight:normal;letter-spacing:0.5px;">Unknown eufy -<br>L3</div>
<div class="t b" style="left:2275px;top:400.61px;font-size:16px;line-height:15.7px;color:#1b8bd0;font-weight:normal;letter-spacing:0.5px;">aged-out</div>
<div class="t b" style="left:2425px;top:400.61px;font-size:16px;line-height:15.7px;color:#1b8bd0;font-weight:normal;letter-spacing:0.5px;">150</div>
<div class="t b" style="left:2515px;top:400.61px;font-size:16px;line-height:15.7px;color:#1b8bd0;font-weight:normal;letter-spacing:0.5px;">0</div>
<div class="t b" style="left:2815px;top:400.61px;font-size:16px;line-height:15.7px;color:#1b8bd0;font-weight:normal;letter-spacing:0.5px;">0</div>
<svg style="left:299px;top:399px" width="26" height="26"><rect x="1.9" y="1.7" width="16.4" height="19" rx="2" fill="none" stroke="#1f6391" stroke-width="1.6"/><path d="M4.3,7.5 H8.8 M4.3,12 H8.8 M4.3,16.7 H13.6" stroke="#1f6391" stroke-width="1.5"/><circle cx="16" cy="9.8" r="6.5" fill="#eef4f7" stroke="#d4a53a" stroke-width="1.4"/><path d="M19.7,15.8 L23.3,23.3" stroke="#d4a53a" stroke-width="1.5"/></svg>
<div class="r" style="left:292px;top:442px;width:2814px;height:42px;background:#ffffff;"></div>
<div class="r" style="left:292px;top:484px;width:2814px;height:2px;background:#e6e8e9;"></div>
<div class="r" style="left:332px;top:444px;width:2px;height:40px;background:#dcdee0;"></div>
<div class="r" style="left:374px;top:444px;width:2px;height:40px;background:#dcdee0;"></div>
<div class="r" style="left:516px;top:444px;width:2px;height:40px;background:#dcdee0;"></div>
<div class="r" style="left:666px;top:444px;width:2px;height:40px;background:#dcdee0;"></div>
<div class="r" style="left:764px;top:444px;width:2px;height:40px;background:#dcdee0;"></div>
<div class="r" style="left:862px;top:444px;width:2px;height:40px;background:#dcdee0;"></div>
<div class="r" style="left:1020px;top:444px;width:2px;height:40px;background:#dcdee0;"></div>
<div class="r" style="left:1170px;top:444px;width:2px;height:40px;background:#dcdee0;"></div>
<div class="r" style="left:1320px;top:444px;width:2px;height:40px;background:#dcdee0;"></div>
<div class="r" style="left:1478px;top:444px;width:2px;height:40px;background:#dcdee0;"></div>
<div class="r" style="left:1628px;top:444px;width:2px;height:40px;background:#dcdee0;"></div>
<div class="r" style="left:1778px;top:444px;width:2px;height:40px;background:#dcdee0;"></div>
<div class="r" style="left:1846px;top:444px;width:2px;height:40px;background:#dcdee0;"></div>
<div class="r" style="left:1996px;top:444px;width:2px;height:40px;background:#dcdee0;"></div>
<div class="r" style="left:2116px;top:444px;width:2px;height:40px;background:#dcdee0;"></div>
<div class="r" style="left:2266px;top:444px;width:2px;height:40px;background:#dcdee0;"></div>
<div class="r" style="left:2416px;top:444px;width:2px;height:40px;background:#dcdee0;"></div>
<div class="r" style="left:2506px;top:444px;width:2px;height:40px;background:#dcdee0;"></div>
<div class="r" style="left:2656px;top:444px;width:2px;height:40px;background:#dcdee0;"></div>
<div class="r" style="left:2806px;top:444px;width:2px;height:40px;background:#dcdee0;"></div>
<div class="r" style="left:2956px;top:444px;width:2px;height:40px;background:#dcdee0;"></div>
<div class="t b" style="left:383px;top:452.61px;font-size:16px;line-height:15.7px;color:#1b8bd0;font-weight:normal;letter-spacing:0.75px;">01/07 01:46:36</div>
<div class="t b" style="left:525px;top:452.61px;font-size:16px;line-height:15.7px;color:#1b8bd0;font-weight:normal;letter-spacing:0.5px;">end</div>
<div class="t b" style="left:675px;top:452.61px;font-size:16px;line-height:15.7px;color:#1b8bd0;font-weight:normal;letter-spacing:0.5px;">Tunnel-L3</div>
<div class="t b" style="left:773px;top:452.61px;font-size:16px;line-height:15.7px;color:#1b8bd0;font-weight:normal;letter-spacing:0.5px;">Untrust-L3</div>
<div class="t b" style="left:871px;top:452.61px;font-size:16px;line-height:15.7px;color:#1b8bd0;font-weight:normal;letter-spacing:0.48px;">192.168.30.15</div>
<div class="t b" style="left:1329px;top:452.61px;font-size:16px;line-height:15.7px;color:#1b8bd0;font-weight:normal;letter-spacing:0.05px;">1.1.1.1</div>
<div class="t b" style="left:1787px;top:452.61px;font-size:16px;line-height:15.7px;color:#1b8bd0;font-weight:normal;letter-spacing:0.5px;">53</div>
<div class="t b" style="left:1855px;top:452.61px;font-size:16px;line-height:15.7px;color:#1b8bd0;font-weight:normal;letter-spacing:0.5px;">dns</div>
<div class="t b" style="left:2005px;top:452.61px;font-size:16px;line-height:15.7px;color:#1b8bd0;font-weight:normal;letter-spacing:0.5px;">allow</div>
<div class="t b" style="left:2125px;top:452.61px;font-size:16px;line-height:15.7px;color:#1b8bd0;font-weight:normal;letter-spacing:0.5px;">Allowed DNS</div>
<div class="t b" style="left:2275px;top:452.61px;font-size:16px;line-height:15.7px;color:#1b8bd0;font-weight:normal;letter-spacing:0.5px;">aged-out</div>
<div class="t b" style="left:2425px;top:452.61px;font-size:16px;line-height:15.7px;color:#1b8bd0;font-weight:normal;letter-spacing:0.5px;">367</div>
<div class="t b" style="left:2515px;top:452.61px;font-size:16px;line-height:15.7px;color:#1b8bd0;font-weight:normal;letter-spacing:0.5px;">0</div>
<div class="t b" style="left:2815px;top:452.61px;font-size:16px;line-height:15.7px;color:#1b8bd0;font-weight:normal;letter-spacing:0.5px;">0</div>
<svg style="left:299px;top:451px" width="26" height="26"><rect x="1.9" y="1.7" width="16.4" height="19" rx="2" fill="none" stroke="#1f6391" stroke-width="1.6"/><path d="M4.3,7.5 H8.8 M4.3,12 H8.8 M4.3,16.7 H13.6" stroke="#1f6391" stroke-width="1.5"/><circle cx="16" cy="9.8" r="6.5" fill="#ffffff" stroke="#d4a53a" stroke-width="1.4"/><path d="M19.7,15.8 L23.3,23.3" stroke="#d4a53a" stroke-width="1.5"/></svg>
<div class="r" style="left:292px;top:486px;width:2814px;height:50px;background:#eef4f7;"></div>
<div class="r" style="left:292px;top:536px;width:2814px;height:2px;background:#e6e8e9;"></div>
<div class="r" style="left:332px;top:488px;width:2px;height:48px;background:#dcdee0;"></div>
<div class="r" style="left:374px;top:488px;width:2px;height:48px;background:#dcdee0;"></div>
<div class="r" style="left:516px;top:488px;width:2px;height:48px;background:#dcdee0;"></div>
<div class="r" style="left:666px;top:488px;width:2px;height:48px;background:#dcdee0;"></div>
<div class="r" style="left:764px;top:488px;width:2px;height:48px;background:#dcdee0;"></div>
<div class="r" style="left:862px;top:488px;width:2px;height:48px;background:#dcdee0;"></div>
<div class="r" style="left:1020px;top:488px;width:2px;height:48px;background:#dcdee0;"></div>
<div class="r" style="left:1170px;top:488px;width:2px;height:48px;background:#dcdee0;"></div>
<div class="r" style="left:1320px;top:488px;width:2px;height:48px;background:#dcdee0;"></div>
<div class="r" style="left:1478px;top:488px;width:2px;height:48px;background:#dcdee0;"></div>
<div class="r" style="left:1628px;top:488px;width:2px;height:48px;background:#dcdee0;"></div>
<div class="r" style="left:1778px;top:488px;width:2px;height:48px;background:#dcdee0;"></div>
<div class="r" style="left:1846px;top:488px;width:2px;height:48px;background:#dcdee0;"></div>
<div class="r" style="left:1996px;top:488px;width:2px;height:48px;background:#dcdee0;"></div>
<div class="r" style="left:2116px;top:488px;width:2px;height:48px;background:#dcdee0;"></div>
<div class="r" style="left:2266px;top:488px;width:2px;height:48px;background:#dcdee0;"></div>
<div class="r" style="left:2416px;top:488px;width:2px;height:48px;background:#dcdee0;"></div>
<div class="r" style="left:2506px;top:488px;width:2px;height:48px;background:#dcdee0;"></div>
<div class="r" style="left:2656px;top:488px;width:2px;height:48px;background:#dcdee0;"></div>
<div class="r" style="left:2806px;top:488px;width:2px;height:48px;background:#dcdee0;"></div>
<div class="r" style="left:2956px;top:488px;width:2px;height:48px;background:#dcdee0;"></div>
<div class="t b" style="left:383px;top:496.61px;font-size:16px;line-height:15.7px;color:#1b8bd0;font-weight:normal;letter-spacing:0.75px;">01/06 17:59:21</div>
<div class="t b" style="left:525px;top:496.61px;font-size:16px;line-height:15.7px;color:#1b8bd0;font-weight:normal;letter-spacing:0.5px;">end</div>
<div class="t b" style="left:675px;top:496.61px;font-size:16px;line-height:15.7px;color:#1b8bd0;font-weight:normal;letter-spacing:0.5px;">Trust-L3</div>
<div class="t b" style="left:773px;top:496.61px;font-size:16px;line-height:15.7px;color:#1b8bd0;font-weight:normal;letter-spacing:0.5px;">Chain-L3</div>
<div class="t b" style="left:871px;top:496.61px;font-size:16px;line-height:15.7px;color:#1b8bd0;font-weight:normal;letter-spacing:0.48px;">192.168.10.47</div>
<div class="t b" style="left:1329px;top:496.61px;font-size:16px;line-height:15.7px;color:#1b8bd0;font-weight:normal;letter-spacing:0.48px;">3.216.64.69</div>
<div class="t b" style="left:1787px;top:496.61px;font-size:16px;line-height:15.7px;color:#1b8bd0;font-weight:normal;letter-spacing:0.5px;">60443</div>
<div class="t b" style="left:1855px;top:496.61px;font-size:16px;line-height:15.7px;color:#1b8bd0;font-weight:normal;letter-spacing:0.5px;">incomplete</div>
<div class="t b" style="left:2005px;top:496.61px;font-size:16px;line-height:15.7px;color:#1b8bd0;font-weight:normal;letter-spacing:0.5px;">allow</div>
<div class="t b" style="left:2125px;top:496.61px;font-size:16px;line-height:15.7px;color:#1b8bd0;font-weight:normal;letter-spacing:0.5px;">Trust to Untrust<br>SP</div>
<div class="t b" style="left:2275px;top:496.61px;font-size:16px;line-height:15.7px;color:#1b8bd0;font-weight:normal;letter-spacing:0.5px;">tcp-rst-from-client</div>
<div class="t b" style="left:2425px;top:496.61px;font-size:16px;line-height:15.7px;color:#1b8bd0;font-weight:normal;letter-spacing:0.5px;">678</div>
<div class="t b" style="left:2515px;top:496.61px;font-size:16px;line-height:15.7px;color:#1b8bd0;font-weight:normal;letter-spacing:0.5px;">0</div>
<div class="t b" style="left:2815px;top:496.61px;font-size:16px;line-height:15.7px;color:#1b8bd0;font-weight:normal;letter-spacing:0.5px;">0</div>
<svg style="left:299px;top:495px" width="26" height="26"><rect x="1.9" y="1.7" width="16.4" height="19" rx="2" fill="none" stroke="#1f6391" stroke-width="1.6"/><path d="M4.3,7.5 H8.8 M4.3,12 H8.8 M4.3,16.7 H13.6" stroke="#1f6391" stroke-width="1.5"/><circle cx="16" cy="9.8" r="6.5" fill="#eef4f7" stroke="#d4a53a" stroke-width="1.4"/><path d="M19.7,15.8 L23.3,23.3" stroke="#d4a53a" stroke-width="1.5"/></svg>
<div class="r" style="left:292px;top:538px;width:2814px;height:42px;background:#ffffff;"></div>
<div class="r" style="left:292px;top:580px;width:2814px;height:2px;background:#e6e8e9;"></div>
<div class="r" style="left:332px;top:540px;width:2px;height:40px;background:#dcdee0;"></div>
<div class="r" style="left:374px;top:540px;width:2px;height:40px;background:#dcdee0;"></div>
<div class="r" style="left:516px;top:540px;width:2px;height:40px;background:#dcdee0;"></div>
<div class="r" style="left:666px;top:540px;width:2px;height:40px;background:#dcdee0;"></div>
<div class="r" style="left:764px;top:540px;width:2px;height:40px;background:#dcdee0;"></div>
<div class="r" style="left:862px;top:540px;width:2px;height:40px;background:#dcdee0;"></div>
<div class="r" style="left:1020px;top:540px;width:2px;height:40px;background:#dcdee0;"></div>
<div class="r" style="left:1170px;top:540px;width:2px;height:40px;background:#dcdee0;"></div>
<div class="r" style="left:1320px;top:540px;width:2px;height:40px;background:#dcdee0;"></div>
<div class="r" style="left:1478px;top:540px;width:2px;height:40px;background:#dcdee0;"></div>
<div class="r" style="left:1628px;top:540px;width:2px;height:40px;background:#dcdee0;"></div>
<div class="r" style="left:1778px;top:540px;width:2px;height:40px;background:#dcdee0;"></div>
<div class="r" style="left:1846px;top:540px;width:2px;height:40px;background:#dcdee0;"></div>
<div class="r" style="left:1996px;top:540px;width:2px;height:40px;background:#dcdee0;"></div>
<div class="r" style="left:2116px;top:540px;width:2px;height:40px;background:#dcdee0;"></div>
<div class="r" style="left:2266px;top:540px;width:2px;height:40px;background:#dcdee0;"></div>
<div class="r" style="left:2416px;top:540px;width:2px;height:40px;background:#dcdee0;"></div>
<div class="r" style="left:2506px;top:540px;width:2px;height:40px;background:#dcdee0;"></div>
<div class="r" style="left:2656px;top:540px;width:2px;height:40px;background:#dcdee0;"></div>
<div class="r" style="left:2806px;top:540px;width:2px;height:40px;background:#dcdee0;"></div>
<div class="r" style="left:2956px;top:540px;width:2px;height:40px;background:#dcdee0;"></div>
<div class="t b" style="left:383px;top:548.61px;font-size:16px;line-height:15.7px;color:#1b8bd0;font-weight:normal;letter-spacing:0.75px;">01/06 11:44:01</div>
<div class="t b" style="left:525px;top:548.61px;font-size:16px;line-height:15.7px;color:#1b8bd0;font-weight:normal;letter-spacing:0.5px;">end</div>
<div class="t b" style="left:675px;top:548.61px;font-size:16px;line-height:15.7px;color:#1b8bd0;font-weight:normal;letter-spacing:0.5px;">Trust-L3</div>
<div class="t b" style="left:773px;top:548.61px;font-size:16px;line-height:15.7px;color:#1b8bd0;font-weight:normal;letter-spacing:0.5px;">Chain-L3</div>
<div class="t b" style="left:871px;top:548.61px;font-size:16px;line-height:15.7px;color:#1b8bd0;font-weight:normal;letter-spacing:0.48px;">192.168.10.253</div>
<div class="t b" style="left:1329px;top:548.61px;font-size:16px;line-height:15.7px;color:#1b8bd0;font-weight:normal;letter-spacing:0.05px;">1.1.1.1</div>
<div class="t b" style="left:1787px;top:548.61px;font-size:16px;line-height:15.7px;color:#1b8bd0;font-weight:normal;letter-spacing:0.5px;">53</div>
<div class="t b" style="left:1855px;top:548.61px;font-size:16px;line-height:15.7px;color:#1b8bd0;font-weight:normal;letter-spacing:0.5px;">dns</div>
<div class="t b" style="left:2005px;top:548.61px;font-size:16px;line-height:15.7px;color:#1b8bd0;font-weight:normal;letter-spacing:0.5px;">allow</div>
<div class="t b" style="left:2125px;top:548.61px;font-size:16px;line-height:15.7px;color:#1b8bd0;font-weight:normal;letter-spacing:0.5px;">Allowed DNS</div>
<div class="t b" style="left:2275px;top:548.61px;font-size:16px;line-height:15.7px;color:#1b8bd0;font-weight:normal;letter-spacing:0.5px;">aged-out</div>
<div class="t b" style="left:2425px;top:548.61px;font-size:16px;line-height:15.7px;color:#1b8bd0;font-weight:normal;letter-spacing:0.5px;">234</div>
<div class="t b" style="left:2515px;top:548.61px;font-size:16px;line-height:15.7px;color:#1b8bd0;font-weight:normal;letter-spacing:0.5px;">0</div>
<div class="t b" style="left:2815px;top:548.61px;font-size:16px;line-height:15.7px;color:#1b8bd0;font-weight:normal;letter-spacing:0.5px;">0</div>
<svg style="left:299px;top:547px" width="26" height="26"><rect x="1.9" y="1.7" width="16.4" height="19" rx="2" fill="none" stroke="#1f6391" stroke-width="1.6"/><path d="M4.3,7.5 H8.8 M4.3,12 H8.8 M4.3,16.7 H13.6" stroke="#1f6391" stroke-width="1.5"/><circle cx="16" cy="9.8" r="6.5" fill="#ffffff" stroke="#d4a53a" stroke-width="1.4"/><path d="M19.7,15.8 L23.3,23.3" stroke="#d4a53a" stroke-width="1.5"/></svg>
<svg style="left:1328px;top:329px;filter:blur(0.9px)" width="122" height="22"><path d="M7,4 H102 Q118,0.5 118.5,6 V17 H7 Q2.5,17 2.5,12 Q2.5,5 7,4 Z" fill="#bcd7ec"/><path d="M7,4.5 Q2.5,6.5 2.5,11.5 Q2.5,16.5 7,16.5" fill="none" stroke="#7fb4de" stroke-width="1.3"/><path d="M100,16.5 H118.5" stroke="#5e9fd6" stroke-width="1.4"/><path d="M116.5,3 Q119,6 117.5,10" fill="none" stroke="#9cc6e6" stroke-width="1"/></svg>
<div class="r" style="left:290px;top:226px;width:2px;height:412px;background:#c9ccce;"></div>
<div class="r" style="left:267px;top:306px;width:69px;height:51px;border:12px solid #ee1f24;"></div>
<div class="r" style="left:1971px;top:303px;width:99px;height:48px;border:12px solid #ee1f24;"></div>
<div class="r" style="left:2241px;top:306px;width:99px;height:48px;border:12px solid #ee1f24;"></div>
</body></html>
